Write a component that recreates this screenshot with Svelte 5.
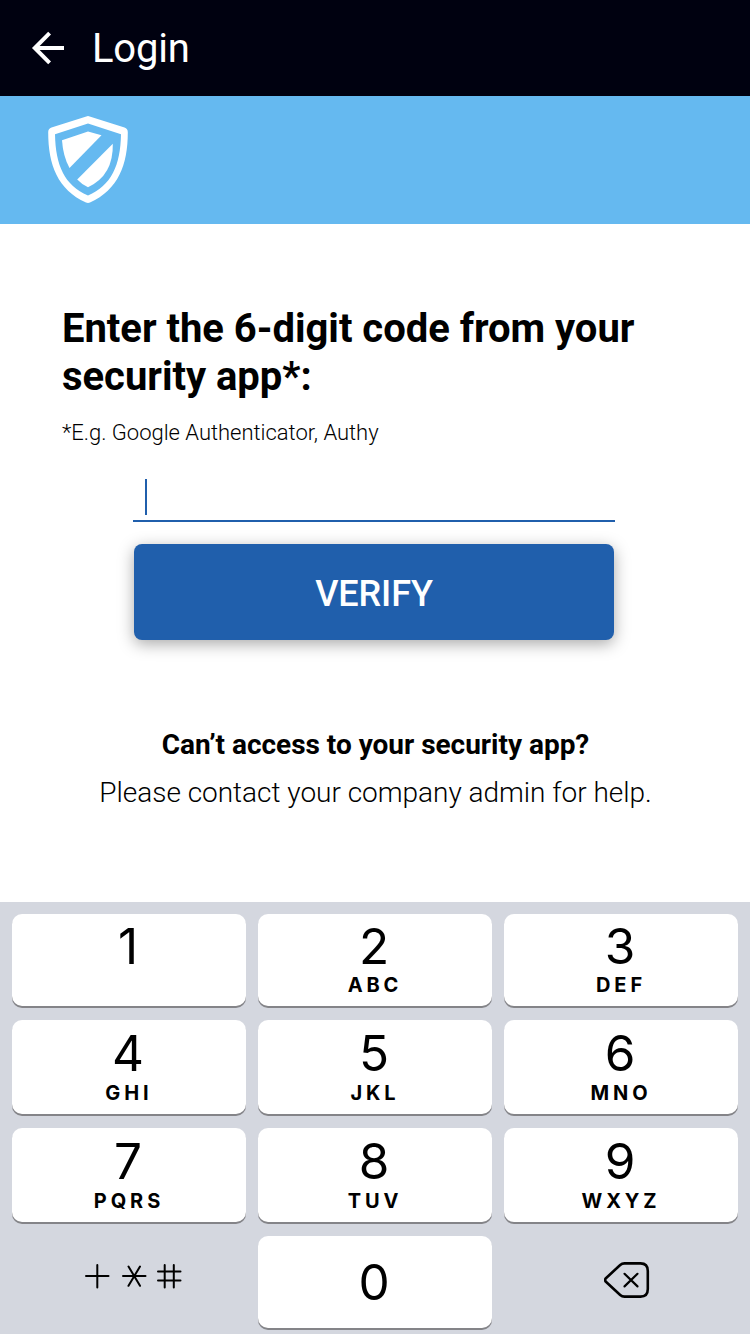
<script>
  const rows = [
    [['1', ''], ['2', 'ABC'], ['3', 'DEF']],
    [['4', 'GHI'], ['5', 'JKL'], ['6', 'MNO']],
    [['7', 'PQRS'], ['8', 'TUV'], ['9', 'WXYZ']],
  ];
</script>

<div class="screen">
  <header class="bar">
    <svg class="back" width="34" height="34" viewBox="0 0 34 34" fill="none" stroke="#fff" stroke-width="4">
      <path d="M33 17H5M18.6 2.2L3.8 17L18.6 31.8" />
    </svg>
    <h1>Login</h1>
  </header>

  <div class="brand">
    <svg width="80" height="88" viewBox="0 0 80 88">
      <path
        fill="#fff"
        fill-rule="evenodd"
        d="M38.3.4Q40-.2 41.7.4L76.5 11.6Q79.8 12.8 79.8 16.2C79.8 49 70.2 73.5 42 86.6Q40 87.4 38 86.6C9.800 73.500 .2 49 .2 16.200Q.2 12.800 3.500 11.600ZM40 7.500L7 18.200C7.600 49.500 16.500 69.200 40 79.500C63.500 69.200 72.400 49.500 73 18.200Z"
      />
      <path fill="#fff" d="M40 15.400L53.500 19.200L21.500 52Q15 40 14 24.200Z" />
      <path fill="#fff" d="M64.800 27.800Q65.500 59.500 40 71.200Q34 68.600 29.200 63.500Z" />
    </svg>
  </div>

  <main>
    <h2>Enter the 6-digit code from your security app*:</h2>
    <p class="hint">*E.g. Google Authenticator, Authy</p>
    <div class="field"><span class="caret"></span></div>
    <button class="verify">VERIFY</button>
    <section class="help">
      <strong>Can’t access to your security app?</strong>
      <p>Please contact your company admin for help.</p>
    </section>
  </main>

  <div class="keyboard">
    {#each rows as row, r}
      {#each row as [digit, letters]}
        <div class="key" class:first={r === 0}>
          <span class="digit">{digit}</span>
          <span class="letters">{letters}</span>
        </div>
      {/each}
    {/each}
    <div class="blank symbols">
      <svg width="98" height="26" viewBox="0 0 98 26" fill="none" stroke="#000" stroke-width="2" stroke-linecap="round">
        <path d="M2 13H24.500M13.300 2V24.500" />
        <path d="M39 13H61.500M44.500 3.500L56 22.800M56 3.500L44.500 22.800" />
        <path d="M74 8.500H96.500M74 17.500H96.500M80.700 2V24.500M89.800 2V24.500" />
      </svg>
    </div>
    <div class="key zero"><span class="digit">0</span></div>
    <div class="blank erase">
      <svg width="46" height="36" viewBox="0 0 46 36" fill="none" stroke="#000" stroke-width="2.600" stroke-linecap="round" stroke-linejoin="round">
        <path d="M20.500 1.400H36.500Q43.800 1.400 43.800 9V27Q43.800 34.600 36.500 34.600H20.500Q18 34.600 16.200 33L1.900 19.800Q.3 18 1.900 16.200L16.200 3Q18 1.400 20.500 1.400Z" />
        <path stroke-width="2.200" d="M20.500 11.800L33.500 24.400M33.500 11.800L20.500 24.400" />
      </svg>
    </div>
  </div>
</div>

<style>
  :global(body) {
    margin: 0;
    background: #fff;
  }
  .screen {
    display: flex;
    flex-direction: column;
    width: 750px;
    height: 1334px;
    overflow: hidden;
    font-family: Roboto, sans-serif;
    color: #000;
  }
  h1, h2, p {
    margin: 0;
  }
  .bar {
    display: flex;
    align-items: center;
    height: 96px;
    box-sizing: border-box;
    padding-left: 31px;
    background: #000110;
  }
  h1 {
    margin-left: 27px;
    padding-top: 2px;
    color: #fff;
    font-size: 40px;
    font-weight: 400;
    line-height: 94px;
    letter-spacing: -0.2px;
  }
  .brand {
    height: 128px;
    box-sizing: border-box;
    padding: 20px 48px;
    background: #65b9f0;
  }
  .brand svg {
    display: block;
  }
  main {
    display: flex;
    flex-direction: column;
    height: 678px;
    box-sizing: border-box;
    padding: 81px 62px 0;
  }
  h2 {
    font-size: 40px;
    line-height: 48px;
    font-weight: 700;
    letter-spacing: -0.03px;
  }
  .hint {
    margin-top: 18px;
    font-size: 22px;
    line-height: 28px;
    font-weight: 300;
    letter-spacing: -0.02px;
  }
  .field {
    display: flex;
    width: 482px;
    height: 75px;
    box-sizing: border-box;
    margin-left: 71px;
    padding: 32px 0 0 12px;
    border-bottom: 2px solid #205fac;
  }
  .caret {
    width: 2px;
    height: 36px;
    background: #205fac;
  }
  .verify {
    width: 480px;
    height: 96px;
    margin: 22px 0 0 72px;
    padding: 4px 0 0;
    border: 0;
    border-radius: 8px;
    background: #205fac;
    box-shadow: 0 4px 16px rgba(0, 0, 0, 0.34);
    color: #fff;
    font: 500 36px/92px Roboto, sans-serif;
    letter-spacing: -0.1px;
  }
  .help {
    margin-top: 81px;
    padding-left: 1px;
    text-align: center;
    font-size: 28px;
    line-height: 48px;
    font-weight: 300;
    letter-spacing: -0.02px;
  }
  .help strong {
    display: block;
    font-weight: 700;
  }
  .keyboard {
    display: grid;
    grid-template-columns: repeat(3, 234px);
    grid-template-rows: 92px 94px 94px 92px;
    gap: 14px 12px;
    height: 432px;
    box-sizing: border-box;
    padding: 12px 12px 0;
    background: #d4d7df;
    font-family: Inter, sans-serif;
  }
  .key {
    display: flex;
    flex-direction: column;
    align-items: center;
    box-sizing: border-box;
    padding-top: 7px;
    border-radius: 10px;
    background: #fff;
    box-shadow: 0 2px 0 #848488;
  }
  .digit {
    font-size: 49.5px;
    line-height: 52px;
    height: 54px;
    margin-right: 2px;
  }
  .letters {
    font-size: 20px;
    line-height: 24px;
    font-weight: 700;
    letter-spacing: 3.9px;
  }
  .first {
    padding-top: 6px;
  }
  .first .digit {
    height: 53px;
  }
  .zero {
    padding-top: 20px;
  }
  .blank {
    display: flex;
  }
  .symbols {
    padding: 27px 0 0 72px;
  }
  .erase {
    padding: 26px 0 0 100px;
  }
</style>
